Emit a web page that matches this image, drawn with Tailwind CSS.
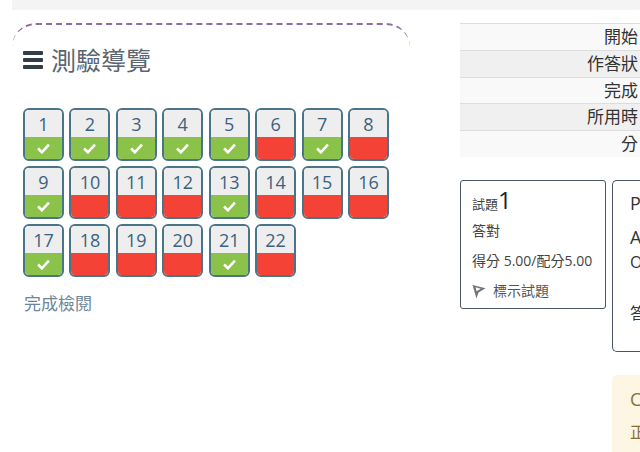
<!DOCTYPE html>
<html lang="zh-TW">
<head>
    <meta charset="UTF-8">
    <title>測驗導覽</title>
    <script src="https://cdn.jsdelivr.net/npm/@tailwindcss/browser@4"></script>
</head>
<body class="w-[640px] h-[452px] overflow-hidden bg-white font-['Open_Sans','Noto_Sans_CJK_TC',sans-serif]">
    <div class="pl-3">
        <div class="h-2.5 bg-[#f4f4f4]"></div>
        <div class="flex pt-[13px]">
            <!-- 測驗導覽 -->
            <div class="w-[398px] shrink-0 h-[300px] rounded-t-[24px] border-t-2 border-dashed border-[#8e6aa6]">
                <h2 class="flex items-center pl-[11px] h-[70px] text-[25px] leading-[30px] text-[#5b6670]">
                    <svg class="w-[20px] h-[18px] mr-[8px] text-[#333d47]" viewBox="0 0 20 18" fill="currentColor"><rect y="0" width="20" height="4" rx="1"/><rect y="7" width="20" height="4" rx="1"/><rect y="14" width="20" height="4" rx="1"/></svg>
                    測驗導覽
                </h2>
                <div id="nav" class="grid grid-cols-[repeat(8,41px)] gap-x-[5.43px] gap-y-[5px] pl-[11px] pt-[13px]"></div>
                <a class="block pl-[12px] pt-[16px] text-[17px] leading-[22px] text-[#6b8599]">完成檢閱</a>
            </div>

            <!-- 右欄 -->
            <div class="ml-[50px] w-[180px] shrink-0">
                <div class="w-[180px] overflow-hidden h-[134px] text-[17px] text-[#333333]">
                    <div class="h-[27px] leading-[26px] bg-[#f9f9f9] border-t border-[#dddddd] pr-[2px] text-right whitespace-nowrap">開始</div>
                    <div class="h-[27px] leading-[26px] bg-[#f0f0f0] border-t border-[#dddddd] pr-[2px] text-right whitespace-nowrap">作答狀</div>
                    <div class="h-[26px] leading-[25px] bg-[#f9f9f9] border-t border-[#dddddd] pr-[2px] text-right whitespace-nowrap">完成</div>
                    <div class="h-[27px] leading-[26px] bg-[#f0f0f0] border-t border-[#dddddd] pr-[2px] text-right whitespace-nowrap">所用時</div>
                    <div class="h-[27px] leading-[26px] bg-[#f9f9f9] border-t border-[#dddddd] pr-[2px] text-right whitespace-nowrap">分</div>
                </div>
                <div class="flex mt-[23px] gap-[6px] w-[300px]">
                    <div class="w-[146px] h-[129px] shrink-0 rounded-[3px] border border-[#4a5560] pl-[11px] pt-[6px] text-[14px] text-[#444444]">
                        <div class="flex items-baseline h-[26px] leading-[26px]"><span class="text-[13px]">試題</span><span class="text-[24px] font-medium text-[#222222]">1</span></div>
                        <div class="mt-[8px] h-[20px] leading-[20px]">答對</div>
                        <div class="mt-[10px] h-[20px] leading-[20px] whitespace-nowrap">得分 5.00/配分5.00</div>
                        <div class="mt-[10px] h-[20px] leading-[20px] flex items-center text-[#555555]">
                            <svg class="w-[14px] h-[15px] mr-[7px]" viewBox="0 0 14 15"><path d="M0.5 1l13 3.2L6.5 8.5 4.5 14.5z" fill="#6f7479"/><path d="M3.5 3.3l5.3 1.4-4.3 2.6z" fill="#fff"/></svg>
                            標示試題
                        </div>
                    </div>
                    <div class="w-[140px] shrink-0">
                        <div class="h-[172px] rounded-l-[5px] border border-r-0 border-[#4a5560] pl-[17px] pt-[10px] text-[18px] text-[#333333]">
                            <div class="h-[24px] leading-[24px]">P</div>
                            <div class="mt-[10px] h-[24px] leading-[24px]">A</div>
                            <div class="mt-[1px] h-[24px] leading-[24px] text-[16px]">O</div>
                            <div class="mt-[27px] h-[24px] leading-[24px] text-[16px]">答</div>
                        </div>
                        <div class="mt-[23px] h-[80px] rounded-tl-[5px] bg-[#fcf6e3] pl-[18px] pt-[12px] text-[18px] text-[#8a6d3b]">
                            <div class="h-[24px] leading-[24px]">C</div>
                            <div class="mt-[9px] h-[24px] leading-[24px] text-[16px]">正</div>
                        </div>
                    </div>
                </div>
            </div>
        </div>
    </div>

    <script>
        // 題號 -> 是否答對
        const correct = [1, 2, 3, 4, 5, 7, 9, 13, 17, 21];
        const check = '<svg class="w-[13px] h-[11px]" viewBox="0 0 12 10" fill="none" stroke="white" stroke-width="2.4"><path d="M1 5l3.5 3.5L11 1.5"/></svg>';
        const nav = document.getElementById('nav');
        for (let i = 1; i <= 22; i++) {
            const ok = correct.includes(i);
            const tile = document.createElement('div');
            tile.className = 'h-[53px] rounded-[6px] border-2 border-[#4a7488] overflow-hidden flex flex-col';
            tile.innerHTML =
                '<div class="h-[27px] bg-[#eeeeee] text-center text-[18px] leading-[29px] text-[#3b6280]">' + i + '</div>' +
                (ok
                    ? '<div class="flex-1 bg-[#8bc34a] flex items-center justify-center">' + check + '</div>'
                    : '<div class="flex-1 bg-[#f44336]"></div>');
            nav.appendChild(tile);
        }
    </script>
</body>
</html>
